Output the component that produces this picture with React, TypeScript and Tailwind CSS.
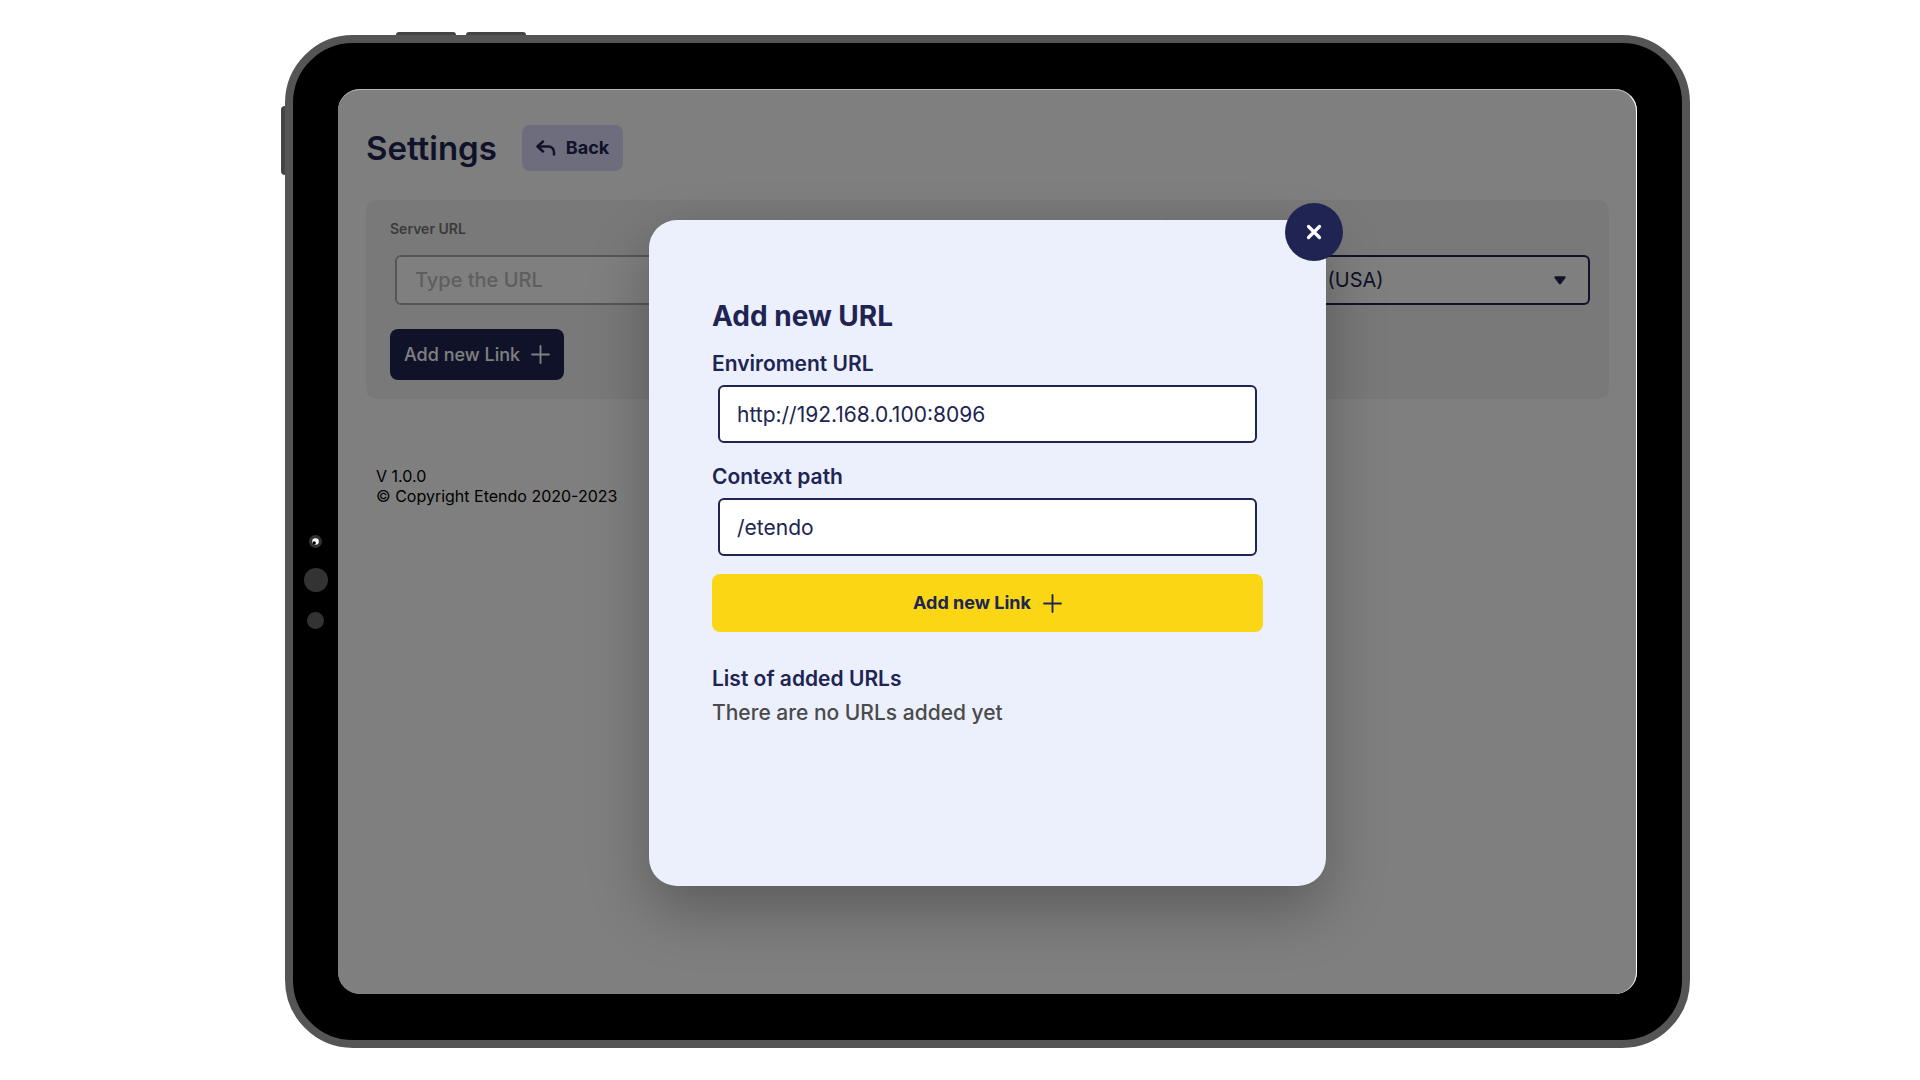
import { useState } from "react";

function PlusIcon({ className }: { className?: string }) {
  return (
    <svg viewBox="0 0 18 18" className={className} fill="none" stroke="currentColor" strokeWidth="1.8" strokeLinecap="round" aria-hidden="true">
      <path d="M9 1v16M1 9h16" />
    </svg>
  );
}

function BackIcon() {
  return (
    <svg viewBox="0 0 20 16" className="h-4 w-5" fill="none" stroke="currentColor" strokeWidth="2.5" strokeLinecap="round" strokeLinejoin="round" aria-hidden="true">
      <path d="M7 1.5L1.5 6.5L7 11.5" />
      <path d="M2 6.5h10.500a5.500 5.500 0 0 1 5.500 5.500v2.500" />
    </svg>
  );
}

function Bezel() {
  return (
    <div className="flex w-[45px] shrink-0 flex-col items-center justify-center gap-5 pt-[80px]" aria-hidden="true">
      <svg viewBox="0 0 13 13" className="h-[13px] w-[13px]">
        <circle cx="6.5" cy="6.5" r="6.5" fill="#333" />
        <circle cx="6.5" cy="6.5" r="3.3" fill="#fff" />
        <circle cx="5.2" cy="8" r="1.7" fill="#000" />
      </svg>
      <span className="h-6 w-6 rounded-full bg-[#333333]" />
      <span className="h-[17px] w-[17px] rounded-full bg-[#333333]" />
    </div>
  );
}

function SettingsPage() {
  return (
    <main className="px-7 pt-9">
      <header className="flex items-center gap-[25px]">
        <h1 className="text-[33px] leading-[46px] font-semibold text-[#202452]">Settings</h1>
        <button type="button" className="flex h-[46px] items-center gap-[10px] rounded-lg bg-[#dddbfa] px-[14px] text-lg font-bold text-[#202452]">
          <BackIcon />
          Back
        </button>
      </header>

      <section className="mt-[29px] flex min-h-[199px] rounded-[10px] bg-[#f3f3f3] py-[18px] pr-[19px] pl-6">
        <div className="flex-1 pr-6">
          <label htmlFor="server-url" className="block pt-px text-sm leading-5 font-semibold text-[#777777]">
            Server URL
          </label>
          <div className="mt-4 pl-[5px]">
            <input
              id="server-url"
              type="text"
              placeholder="Type the URL"
              className="h-[50px] w-full rounded-md border-2 border-[#adadad] bg-white px-[18px] text-xl font-medium placeholder:text-[#bcbcbc]"
            />
          </div>
          <button type="button" className="mt-6 flex h-[51px] items-center gap-[11px] rounded-lg bg-[#202452] px-[14px] text-lg font-medium text-white">
            Add new Link
            <PlusIcon className="h-[19px] w-[19px]" />
          </button>
        </div>
        <div className="flex-1 border-l border-[#dddddd]" />
        <div className="flex-1 border-l border-[#dddddd] pl-12">
          <label htmlFor="language" className="block pt-px text-sm leading-5 font-semibold text-[#777777]">
            Language
          </label>
          <div className="relative mt-4">
            <select
              id="language"
              className="h-[50px] w-full appearance-none rounded-md border-2 border-[#202452] bg-white pr-10 pl-[37px] text-xl text-[#202452]"
            >
              <option>English (USA)</option>
            </select>
            <svg viewBox="0 0 12 9" className="pointer-events-none absolute top-[21px] right-6 h-[9px] w-3 text-[#202452]" aria-hidden="true">
              <path d="M1.5 0.3h9c1 0 1.5 1 .9 1.8L7.1 7.8c-.6.8-1.6.8-2.2 0L.6 2.100C0 1.300.5.300 1.500.300z" fill="currentColor" />
            </svg>
          </div>
        </div>
      </section>

      <footer className="mt-[67px] pl-[10px] text-base leading-5 text-black">
        <p>V 1.0.0</p>
        <p>© Copyright Etendo 2020-2023</p>
      </footer>
    </main>
  );
}

function Field({ id, label, initial }: { id: string; label: string; initial: string }) {
  const [value, setValue] = useState(initial);
  return (
    <div>
      <label htmlFor={id} className="block text-[21px] leading-7 font-semibold text-[#202452]">
        {label}
      </label>
      <div className="mt-[7px] px-[6px]">
        <input
          id={id}
          type="text"
          value={value}
          onChange={(e) => setValue(e.target.value)}
          className="h-[58px] w-full rounded-md border-2 border-[#202452] bg-white px-[17px] text-[21px] text-[#202452]"
        />
      </div>
    </div>
  );
}

function AddUrlDialog() {
  return (
    <div className="absolute inset-0 flex items-start justify-center rounded-[22px] bg-black/50 px-6 pt-[131px]">
      <div
        role="dialog"
        aria-labelledby="dialog-title"
        className="relative min-h-[666px] w-full max-w-[677px] rounded-[28px] bg-[#ecf0fd] px-[63px] pt-[78px] shadow-[0_24px_60px_rgba(0,0,0,0.28)]"
      >
        <button type="button" aria-label="Close" className="absolute -top-[17px] -right-[17px] flex h-[58px] w-[58px] items-center justify-center rounded-full bg-[#202452] text-white">
          <svg viewBox="0 0 16 16" className="h-4 w-4" fill="none" stroke="currentColor" strokeWidth="3.200" strokeLinecap="round" aria-hidden="true">
            <path d="M2.500 2.500l11 11M13.500 2.500l-11 11" />
          </svg>
        </button>

        <h2 id="dialog-title" className="text-[28px] leading-9 font-bold text-[#202452]">
          Add new URL
        </h2>
        <form className="mt-4" onSubmit={(e) => e.preventDefault()}>
          <div className="flex flex-col gap-5">
            <Field id="environment-url" label="Enviroment URL" initial="http://192.168.0.100:8096" />
            <Field id="context-path" label="Context path" initial="/etendo" />
          </div>
          <button type="submit" className="mt-[18px] flex h-[58px] w-full items-center justify-center gap-3 rounded-lg bg-[#fad614] text-lg font-bold text-[#202452]">
            Add new Link
            <PlusIcon className="h-[19px] w-[19px]" />
          </button>
        </form>
        <h3 className="mt-8 pt-px text-[21px] leading-7 font-semibold text-[#202452]">List of added URLs</h3>
        <p className="mt-[6px] text-[21px] leading-7 font-medium text-[#4a4a4a]">There are no URLs added yet</p>
      </div>
    </div>
  );
}

export default function App() {
  return (
    <div className="flex min-h-screen bg-white pt-[35px] pr-[230px] pb-8 pl-[285px] font-['Inter',sans-serif]">
      <div className="relative flex flex-1 rounded-[68px] border-8 border-[#555555] bg-black py-[46px] pr-[45px]">
        <span className="absolute -top-[11px] left-[103px] h-[3px] w-[60px] rounded-t-sm bg-[#444444]" />
        <span className="absolute -top-[11px] left-[173px] h-[3px] w-[60px] rounded-t-sm bg-[#444444]" />
        <span className="absolute top-[63px] -left-3 h-[69px] w-1 rounded-l-sm bg-[#444444]" />
        <Bezel />
        <div className="relative flex-1 rounded-[22px] bg-white">
          <SettingsPage />
          <AddUrlDialog />
          <div className="pointer-events-none absolute inset-0 rounded-[22px] border-t border-r border-t-[#b5b5b5] border-r-white" />
        </div>
      </div>
    </div>
  );
}
